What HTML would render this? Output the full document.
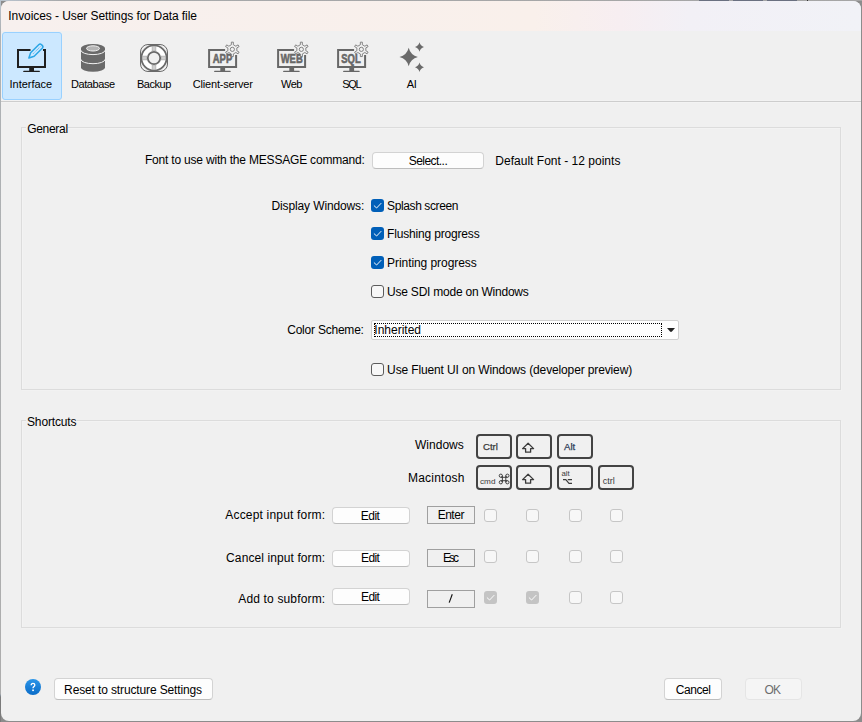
<!DOCTYPE html>
<html><head><meta charset="utf-8">
<style>
*{box-sizing:border-box;margin:0;padding:0}
html,body{width:862px;height:722px;overflow:hidden;background:#8c8c8c}
body{position:relative;font-family:"Liberation Sans",sans-serif}
.win{position:absolute;left:1px;top:1px;width:860px;height:720px;background:#f0f0f0;border-radius:8px;overflow:hidden;}
.title{position:absolute;left:0;top:0;width:860px;height:30px;background:linear-gradient(90deg,#f7f0ee 0%,#f9f0eb 62%,#f7eef1 72%,#f2f0f6 80%,#f1f2f7 100%)}
.t{position:absolute;white-space:nowrap;line-height:16px;height:16px}
.a{position:absolute}
.sep{position:absolute;left:0;top:100px;width:860px;height:1px;background:#cdcdcd;box-shadow:0 1px 0 #f3f3f3,0 -1px 0 #f2f2f2}
.grp{position:absolute;border:1px solid #dcdcdc;box-shadow:inset 1px 1px 0 #f3f3f3,1px 1px 0 #f2f2f2}
.gl{position:absolute;background:#f0f0f0;height:6px}
.btn{position:absolute;background:#fdfdfd;border:1px solid #d3d3d3;border-bottom-color:#bdbdbd;border-radius:4px}
.cb{position:absolute;width:13px;height:13px;border-radius:3px}
.cbon{background:#005fb8}
.cboff{border:1px solid #5c5c5c;background:#f7f7f7}
.cbdis{border:1px solid #c6c6c6;background:#f7f7f7}
.cbdison{background:#c4c4c4}
.key{position:absolute;width:36px;height:24.5px;border:2px solid #434343;border-radius:4px}
.kt{position:absolute;font-family:"Liberation Sans",sans-serif;white-space:nowrap;color:#3b3b3b;line-height:10px}
.kbox{position:absolute;border:1px solid #9f9f9f;background:#f0f0f0}
</style></head><body>
<div class="a" style="left:0;top:0;width:1px;height:722px;background:linear-gradient(#b9c4cf 0,#aeb2b5 30px,#adadad 694px,#8f9aa5 695px,#7a7a7a 697px,#7a7a7a 100%)"></div>
<div class="a" style="left:0;top:0;width:862px;height:1px;background:linear-gradient(90deg,#b9c4cf 0,#a7a9ab 60px,#a5a5a5 100%)"></div>
<div class="a" style="left:699px;top:0;width:30px;height:1px;background:#6a7080"></div>
<div class="a" style="left:733px;top:0;width:30px;height:1px;background:#6a7080"></div>
<div class="a" style="left:767px;top:0;width:30px;height:1px;background:#6a7080"></div>
<div class="a" style="left:807px;top:0;width:1px;height:1px;background:#333"></div>
<div class="win">
 <div class="title"></div>
 <!-- selected tab -->
 <div class="a" style="left:1px;top:31px;width:60px;height:68px;background:#cce8ff;border:1px solid #99d1ff;border-radius:3px"></div>
 <div class="sep"></div>
 <div class="grp" style="left:20px;top:126px;width:820px;height:263px"></div>
 <div class="gl" style="left:25px;top:123px;width:42px"></div>
 <div class="grp" style="left:20px;top:419px;width:820px;height:208px"></div>
 <div class="gl" style="left:25px;top:416px;width:51px"></div>
</div>
<!-- everything else positioned in page coords -->
<div class="btn" style="left:372px;top:152px;width:112px;height:17px"></div>
<div class="cb cbon" style="left:371px;top:199px"></div>
<div class="cb cbon" style="left:371px;top:227px"></div>
<div class="cb cbon" style="left:371px;top:256px"></div>
<div class="cb cboff" style="left:371px;top:285px"></div>
<div class="cb cboff" style="left:371px;top:363px"></div>
<div class="a" style="left:371px;top:320px;width:308px;height:20px;background:#fdfdfd;border:1px solid #d0d0d0;border-radius:2px"></div>
<div class="a" style="left:374px;top:323px;width:288px;height:14px;border:1px dotted #000"></div>
<svg class="a" style="left:666px;top:327px" width="10" height="6"><path d="M1 1H8L4.5 5Z" fill="#222"/></svg>

<div class="key" style="left:476px;top:434px"></div>
<div class="key" style="left:516px;top:434px"></div>
<div class="key" style="left:557px;top:434px"></div>
<div class="key" style="left:476px;top:465px"></div>
<div class="key" style="left:516px;top:465px"></div>
<div class="key" style="left:557px;top:465px"></div>
<div class="key" style="left:598px;top:465px"></div>

<div class="btn" style="left:332px;top:507px;width:78px;height:17px"></div>
<div class="btn" style="left:332px;top:550px;width:78px;height:17px"></div>
<div class="btn" style="left:332px;top:588px;width:78px;height:17px"></div>
<div class="kbox" style="left:427px;top:506px;width:48px;height:18px"></div>
<div class="kbox" style="left:427px;top:549px;width:48px;height:18px"></div>
<div class="kbox" style="left:427px;top:590px;width:48px;height:18px"></div>

<div class="cb cbdis" style="left:484px;top:509px"></div>
<div class="cb cbdis" style="left:526px;top:509px"></div>
<div class="cb cbdis" style="left:569px;top:509px"></div>
<div class="cb cbdis" style="left:610px;top:509px"></div>
<div class="cb cbdis" style="left:484px;top:550px"></div>
<div class="cb cbdis" style="left:526px;top:550px"></div>
<div class="cb cbdis" style="left:569px;top:550px"></div>
<div class="cb cbdis" style="left:610px;top:550px"></div>
<div class="cb cbdison" style="left:484px;top:591px"></div>
<div class="cb cbdison" style="left:526px;top:591px"></div>
<div class="cb cbdis" style="left:569px;top:591px"></div>
<div class="cb cbdis" style="left:610px;top:591px"></div>

<div class="btn" style="left:54px;top:678px;width:159px;height:22px"></div>
<div class="btn" style="left:664px;top:678px;width:58px;height:22px"></div>
<div class="a" style="left:745px;top:678px;width:57px;height:22px;background:#f5f5f5;border:1px solid #e5e5e5;border-radius:4px"></div>
<div class="a" style="left:25px;top:679px;width:16px;height:16px;border-radius:50%;background:linear-gradient(#2b95e8,#0a6cc8)"></div>

<svg class="a" style="left:0;top:0" width="862" height="110" viewBox="0 0 862 110"><path d="M30.5 50H18V67H45V50H43" fill="none" stroke="#1f1f1f" stroke-width="2"/><rect x="29.2" y="68" width="4.8" height="3.2" fill="#1f1f1f"/><rect x="23.2" y="70.8" width="16.7" height="1.3" rx="0.6" fill="#1f1f1f"/><g transform="translate(28.3 58.6) rotate(-45)"><path d="M0.8 0L5.8 -2.5H17.2Q19.2 -2.5 19.2 -0.5V0.5Q19.2 2.5 17.2 2.5H5.8Z" fill="#cde8ff" stroke="#2ba6e6" stroke-width="1.5" stroke-linejoin="round"/><path d="M7 0H17.5" stroke="#2aa5e6" stroke-width="0.9" stroke-dasharray="0.9 0.9"/></g><path d="M81 48.3V67.2A12 4.5 0 0 0 105 67.2V48.3Z" fill="#6a6a6a"/><ellipse cx="93" cy="48.3" rx="12" ry="4.3" fill="#6a6a6a"/><path d="M81 50.3A12 4.3 0 0 0 105 50.3" fill="none" stroke="#f0f0f0" stroke-width="1"/><path d="M81 59.4A12 4.3 0 0 0 105 59.4" fill="none" stroke="#f0f0f0" stroke-width="1"/><ellipse cx="93" cy="48.4" rx="6.5" ry="2.6" fill="#b4b4b4" stroke="#f0f0f0" stroke-width="1"/><rect x="140.5" y="44.5" width="27" height="27" rx="7.5" fill="none" stroke="#6a6a6a" stroke-width="1"/><circle cx="154" cy="58" r="12.6" fill="#ffffff" stroke="#6a6a6a" stroke-width="1.8"/><rect x="152.1" y="46.3" width="3.8" height="4.5" fill="#cfcfcf" stroke="#a8a8a8" stroke-width="0.6"/><rect x="152.1" y="65.2" width="3.8" height="4.5" fill="#cfcfcf" stroke="#a8a8a8" stroke-width="0.6"/><rect x="142.3" y="56.1" width="4.5" height="3.8" fill="#cfcfcf" stroke="#a8a8a8" stroke-width="0.6"/><rect x="161.2" y="56.1" width="4.5" height="3.8" fill="#cfcfcf" stroke="#a8a8a8" stroke-width="0.6"/><circle cx="154" cy="58" r="6.2" fill="#f0f0f0" stroke="#6a6a6a" stroke-width="1.8"/><g><path d="M225.1 50H209.1V67H236.1V55" fill="none" stroke="#676767" stroke-width="2"/><rect x="220.29999999999998" y="68" width="4.8" height="3.2" fill="#676767"/><rect x="214.1" y="70.8" width="16.6" height="1.3" rx="0.6" fill="#676767"/><text x="212.8" y="62.8" font-family="Liberation Sans" font-weight="bold" font-size="12.8" fill="#676767" stroke="#676767" stroke-width="0.6" textLength="19.4" lengthAdjust="spacingAndGlyphs">APP</text><path d="M231.35 44.76 L231.35 42.15 L233.35 42.15 L233.35 44.76 L235.83 46.19 L238.09 44.88 L239.09 46.62 L236.83 47.92 L236.83 50.78 L239.09 52.08 L238.09 53.82 L235.83 52.51 L233.35 53.94 L233.35 56.55 L231.35 56.55 L231.35 53.94 L228.87 52.51 L226.61 53.82 L225.61 52.08 L227.87 50.78 L227.87 47.92 L225.61 46.62 L226.61 44.88 L228.87 46.19Z" fill="#f0f0f0" stroke="#7a7a7a" stroke-width="0.9" stroke-linejoin="round"/><circle cx="232.35" cy="49.35" r="2.1" fill="none" stroke="#777" stroke-width="0.9"/></g><g><path d="M294.1 50H278.1V67H305.1V55" fill="none" stroke="#676767" stroke-width="2"/><rect x="289.3" y="68" width="4.8" height="3.2" fill="#676767"/><rect x="283.1" y="70.8" width="16.6" height="1.3" rx="0.6" fill="#676767"/><text x="280.70000000000005" y="62.8" font-family="Liberation Sans" font-weight="bold" font-size="12.8" fill="#676767" stroke="#676767" stroke-width="0.6" textLength="22.0" lengthAdjust="spacingAndGlyphs">WEB</text><path d="M300.35 44.76 L300.35 42.15 L302.35 42.15 L302.35 44.76 L304.83 46.19 L307.09 44.88 L308.09 46.62 L305.83 47.92 L305.83 50.78 L308.09 52.08 L307.09 53.82 L304.83 52.51 L302.35 53.94 L302.35 56.55 L300.35 56.55 L300.35 53.94 L297.87 52.51 L295.61 53.82 L294.61 52.08 L296.87 50.78 L296.87 47.92 L294.61 46.62 L295.61 44.88 L297.87 46.19Z" fill="#f0f0f0" stroke="#7a7a7a" stroke-width="0.9" stroke-linejoin="round"/><circle cx="301.35" cy="49.35" r="2.1" fill="none" stroke="#777" stroke-width="0.9"/></g><g><path d="M354.1 50H338.1V67H365.1V55" fill="none" stroke="#676767" stroke-width="2"/><rect x="349.3" y="68" width="4.8" height="3.2" fill="#676767"/><rect x="343.1" y="70.8" width="16.6" height="1.3" rx="0.6" fill="#676767"/><text x="341.3" y="62.8" font-family="Liberation Sans" font-weight="bold" font-size="12.8" fill="#676767" stroke="#676767" stroke-width="0.6" textLength="19.4" lengthAdjust="spacingAndGlyphs">SQL</text><path d="M360.35 44.76 L360.35 42.15 L362.35 42.15 L362.35 44.76 L364.83 46.19 L367.09 44.88 L368.09 46.62 L365.83 47.92 L365.83 50.78 L368.09 52.08 L367.09 53.82 L364.83 52.51 L362.35 53.94 L362.35 56.55 L360.35 56.55 L360.35 53.94 L357.87 52.51 L355.61 53.82 L354.61 52.08 L356.87 50.78 L356.87 47.92 L354.61 46.62 L355.61 44.88 L357.87 46.19Z" fill="#f0f0f0" stroke="#7a7a7a" stroke-width="0.9" stroke-linejoin="round"/><circle cx="361.35" cy="49.35" r="2.1" fill="none" stroke="#777" stroke-width="0.9"/></g><path d="M408.70 47.80Q410.54 55.16 417.90 57.00Q410.54 58.84 408.70 66.20Q406.86 58.84 399.50 57.00Q406.86 55.16 408.70 47.80Z" fill="#6a6a6a"/><path d="M419.50 42.30Q420.49 45.97 424.00 47.00Q420.49 48.03 419.50 51.70Q418.51 48.03 415.00 47.00Q418.51 45.97 419.50 42.30Z" fill="#6a6a6a"/><path d="M419.50 62.50Q420.49 66.17 424.00 67.20Q420.49 68.23 419.50 71.90Q418.51 68.23 415.00 67.20Q418.51 66.17 419.50 62.50Z" fill="#6a6a6a"/></svg>
<svg class="a" style="left:0;top:0" width="862" height="722" viewBox="0 0 862 722">
 <g fill="none" stroke="#fff" stroke-width="0.95" stroke-linecap="round" stroke-linejoin="round">
  <path d="M374.2 205.8L376.6 208L381 203.4"/>
  <path d="M374.2 233.8L376.6 236L381 231.4"/>
  <path d="M374.2 262.8L376.6 265L381 260.4"/>
  <path d="M487.2 597.8L489.6 600L494 595.4"/>
  <path d="M529.2 597.8L531.6 600L536 595.4"/>
 </g>
 <path d="M668 328H675L671.5 332Z" fill="#222"/>
 <!-- shift arrows -->
 <path d="M528.1 443.3L522.6 448.6H525.6V452.2H530.6V448.6H533.6Z" fill="none" stroke="#3b3b3b" stroke-width="1.3" stroke-linejoin="round"/>
 <path d="M528.1 474.3L522.6 479.6H525.6V483.2H530.6V479.6H533.6Z" fill="none" stroke="#3b3b3b" stroke-width="1.3" stroke-linejoin="round"/>
 <!-- option symbol -->
 <path d="M563 479.6H565.8L569 483.4H572M567.8 479.6H572" fill="none" stroke="#3b3b3b" stroke-width="1.1"/>
 <!-- cmd symbol -->
 <g fill="none" stroke="#3b3b3b" stroke-width="0.95">
  <path d="M502.40000000000003 475.7V482.3M505.8 475.7V482.3M500.8 477.3H507.40000000000003M500.8 480.7H507.40000000000003"/>
  <circle cx="500.8" cy="475.7" r="1.6"/><circle cx="507.40000000000003" cy="475.7" r="1.6"/>
  <circle cx="500.8" cy="482.3" r="1.6"/><circle cx="507.40000000000003" cy="482.3" r="1.6"/>
 </g>
 <!-- help ? -->
 <path d="M31.2 685.3Q31.2 683.3 33 683.3Q34.8 683.3 34.8 685Q34.8 686.1 33.8 686.7Q33 687.2 33 688.3" fill="none" stroke="#fff" stroke-width="1.35"/>
 <rect x="32.2" y="689.5" width="1.7" height="1.6" fill="#fff"/>
 <!-- key labels -->
 <text x="483" y="450" font-family="Liberation Sans" font-size="9.6" fill="#3b3b3b" stroke="#3b3b3b" stroke-width="0.25">Ctrl</text>
 <text x="564" y="450" font-family="Liberation Sans" font-size="9.6" fill="#2b3a55" stroke="#2b3a55" stroke-width="0.25">Alt</text>
 <text x="480" y="483.6" font-family="Liberation Sans" font-size="8" fill="#3b3b3b" textLength="15.5" lengthAdjust="spacingAndGlyphs">cmd</text>
 <text x="561.5" y="476.2" font-family="Liberation Sans" font-size="7.8" fill="#3b3b3b">alt</text>
 <text x="602.7" y="484" font-family="Liberation Sans" font-size="9" fill="#3b3b3b">ctrl</text>
 <path d="M449.2 602.6L452.3 594.3" stroke="#111" stroke-width="1.15"/>
</svg>

<div class="t" style="left:8.30px;top:7.94px;font-size:12px;letter-spacing:-0.074px;color:#000;">Invoices - User Settings for Data file</div>
<div class="t" style="left:9.50px;top:75.99px;font-size:11px;letter-spacing:-0.011px;color:#000;">Interface</div>
<div class="t" style="left:70.90px;top:75.99px;font-size:11px;letter-spacing:-0.410px;color:#000;">Database</div>
<div class="t" style="left:137.00px;top:75.99px;font-size:11px;letter-spacing:-0.474px;color:#000;">Backup</div>
<div class="t" style="left:192.70px;top:75.99px;font-size:11px;letter-spacing:-0.174px;color:#000;">Client-server</div>
<div class="t" style="left:281.00px;top:75.99px;font-size:11px;letter-spacing:-0.551px;color:#000;">Web</div>
<div class="t" style="left:342.30px;top:75.99px;font-size:11px;letter-spacing:-1.297px;color:#000;">SQL</div>
<div class="t" style="left:406.80px;top:75.99px;font-size:11px;letter-spacing:-0.337px;color:#000;">AI</div>
<div class="t" style="left:27.20px;top:120.54px;font-size:12px;letter-spacing:-0.304px;color:#000;">General</div>
<div class="t" style="left:144.90px;top:151.74px;font-size:12px;letter-spacing:-0.190px;color:#000;">Font to use with the MESSAGE command:</div>
<div class="t" style="left:408.70px;top:153.14px;font-size:12px;letter-spacing:-0.540px;color:#000;">Select...</div>
<div class="t" style="left:495.30px;top:153.14px;font-size:12px;letter-spacing:0.016px;color:#000;">Default Font - 12 points</div>
<div class="t" style="left:271.50px;top:197.84px;font-size:12px;letter-spacing:-0.124px;color:#000;">Display Windows:</div>
<div class="t" style="left:387.10px;top:197.64px;font-size:12px;letter-spacing:-0.397px;color:#000;">Splash screen</div>
<div class="t" style="left:387.10px;top:226.14px;font-size:12px;letter-spacing:-0.174px;color:#000;">Flushing progress</div>
<div class="t" style="left:387.10px;top:255.14px;font-size:12px;letter-spacing:-0.069px;color:#000;">Printing progress</div>
<div class="t" style="left:387.10px;top:283.94px;font-size:12px;letter-spacing:-0.228px;color:#000;">Use SDI mode on Windows</div>
<div class="t" style="left:287.20px;top:321.84px;font-size:12px;letter-spacing:-0.219px;color:#000;">Color Scheme:</div>
<div class="t" style="left:374.30px;top:321.64px;font-size:12px;letter-spacing:-0.003px;color:#000;">Inherited</div>
<div class="t" style="left:387.10px;top:361.54px;font-size:12px;letter-spacing:-0.132px;color:#000;">Use Fluent UI on Windows (developer preview)</div>
<div class="t" style="left:27.00px;top:413.54px;font-size:12px;letter-spacing:-0.149px;color:#000;">Shortcuts</div>
<div class="t" style="left:415.00px;top:437.04px;font-size:12px;letter-spacing:0.020px;color:#000;">Windows</div>
<div class="t" style="left:408.00px;top:470.04px;font-size:12px;letter-spacing:0.223px;color:#000;">Macintosh</div>
<div class="t" style="left:225.30px;top:506.84px;font-size:12px;letter-spacing:0.184px;color:#000;">Accept input form:</div>
<div class="t" style="left:226.10px;top:549.94px;font-size:12px;letter-spacing:0.097px;color:#000;">Cancel input form:</div>
<div class="t" style="left:238.30px;top:590.64px;font-size:12px;letter-spacing:0.152px;color:#000;">Add to subform:</div>
<div class="t" style="left:360.70px;top:507.64px;font-size:12px;letter-spacing:-0.481px;color:#000;">Edit</div>
<div class="t" style="left:361.00px;top:550.44px;font-size:12px;letter-spacing:-0.615px;color:#000;">Edit</div>
<div class="t" style="left:361.00px;top:588.74px;font-size:12px;letter-spacing:-0.615px;color:#000;">Edit</div>
<div class="t" style="left:437.70px;top:506.64px;font-size:12px;letter-spacing:-0.496px;color:#000;">Enter</div>
<div class="t" style="left:443.10px;top:549.94px;font-size:12px;letter-spacing:-2.002px;color:#000;">Esc</div>
<div class="t" style="left:64.10px;top:681.74px;font-size:12px;letter-spacing:-0.131px;color:#000;">Reset to structure Settings</div>
<div class="t" style="left:675.70px;top:681.94px;font-size:12px;letter-spacing:-0.418px;color:#000;">Cancel</div>
<div class="t" style="left:764.40px;top:681.94px;font-size:12px;letter-spacing:-0.734px;color:#6d6d6d;">OK</div>
</body></html>
